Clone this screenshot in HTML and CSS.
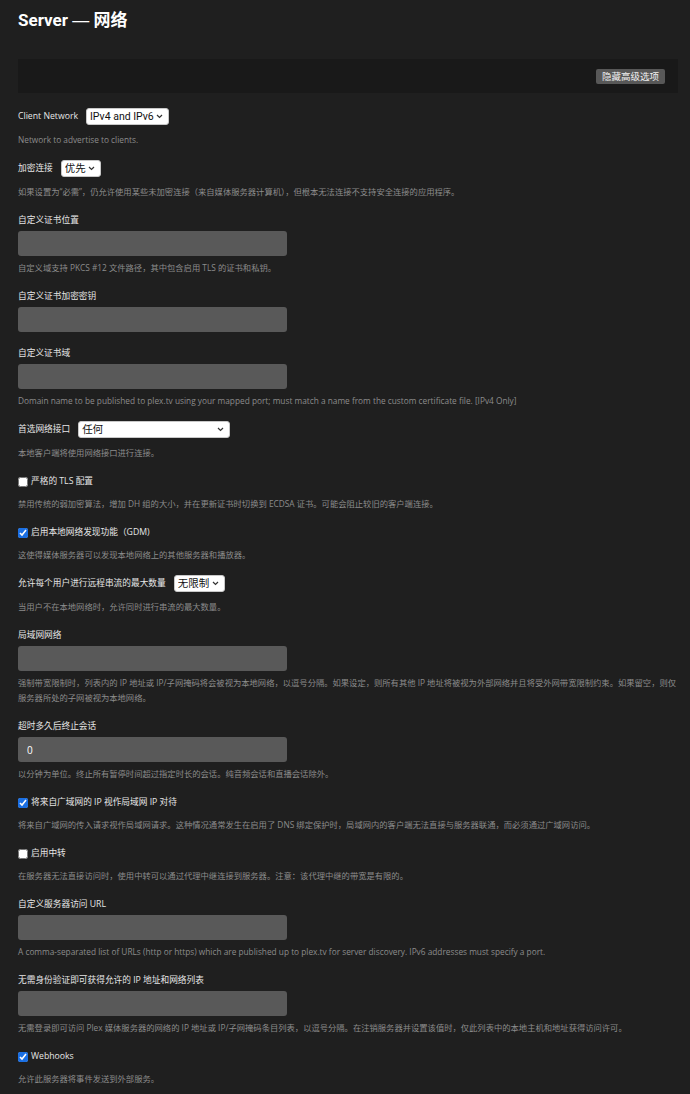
FILE: index.html
```html
<!DOCTYPE html>
<html lang="zh-CN">
<head>
    <meta charset="utf-8">
    <title>Server — 网络</title>
    <link rel="stylesheet" href="styles.css">
</head>
<body>
    <div class="page">
        <h1 class="title">Server <span class="dash">—</span> 网络</h1>

        <div class="toolbar">
            <button class="btn-advanced">隐藏高级选项</button>
        </div>

        <!-- Client network -->
        <div class="field">
            <div class="row">
                <label class="label">Client Network</label>
                <select class="select">
                    <option>IPv4 and IPv6</option>
                </select>
            </div>
            <p class="help">Network to advertise to clients.</p>
        </div>

        <div class="field">
            <div class="row">
                <label class="label">加密连接</label>
                <select class="select">
                    <option>优先</option>
                </select>
            </div>
            <p class="help">如果设置为“必需”，仍允许使用某些未加密连接（来自媒体服务器计算机），但根本无法连接不支持安全连接的应用程序。</p>
        </div>

        <div class="field">
            <label class="label block">自定义证书位置</label>
            <input class="text-input" type="text">
            <p class="help">自定义域支持 PKCS #12 文件路径，其中包含启用 TLS 的证书和私钥。</p>
        </div>

        <div class="field">
            <label class="label block">自定义证书加密密钥</label>
            <input class="text-input" type="text">
        </div>

        <div class="field">
            <label class="label block">自定义证书域</label>
            <input class="text-input" type="text">
            <p class="help">Domain name to be published to plex.tv using your mapped port; must match a name from the custom certificate file. [IPv4 Only]</p>
        </div>

        <div class="field">
            <div class="row">
                <label class="label">首选网络接口</label>
                <select class="select sel-wide">
                    <option>任何</option>
                </select>
            </div>
            <p class="help">本地客户端将使用网络接口进行连接。</p>
        </div>

        <div class="field">
            <label class="row check">
                <input type="checkbox">
                <span class="label">严格的 TLS 配置</span>
            </label>
            <p class="help">禁用传统的弱加密算法，增加 DH 组的大小，并在更新证书时切换到 ECDSA 证书。可能会阻止较旧的客户端连接。</p>
        </div>

        <div class="field">
            <label class="row check">
                <input type="checkbox" checked>
                <span class="label">启用本地网络发现功能（GDM)</span>
            </label>
            <p class="help">这使得媒体服务器可以发现本地网络上的其他服务器和播放器。</p>
        </div>

        <div class="field">
            <div class="row">
                <label class="label">允许每个用户进行远程串流的最大数量</label>
                <select class="select">
                    <option>无限制</option>
                </select>
            </div>
            <p class="help">当用户不在本地网络时，允许同时进行串流的最大数量。</p>
        </div>

        <div class="field">
            <label class="label block">局域网网络</label>
            <input class="text-input" type="text">
            <p class="help">强制带宽限制时，列表内的 IP 地址或 IP/子网掩码将会被视为本地网络，以逗号分隔。如果设定，则所有其他 IP 地址将被视为外部网络并且将受外网带宽限制约束。如果留空，则仅服务器所处的子网被视为本地网络。</p>
        </div>

        <div class="field">
            <label class="label block">超时多久后终止会话</label>
            <input class="text-input" type="text" value="0">
            <p class="help">以分钟为单位。终止所有暂停时间超过指定时长的会话。纯音频会话和直播会话除外。</p>
        </div>

        <div class="field">
            <label class="row check">
                <input type="checkbox" checked>
                <span class="label">将来自广域网的 IP 视作局域网 IP 对待</span>
            </label>
            <p class="help">将来自广域网的传入请求视作局域网请求。这种情况通常发生在启用了 DNS 绑定保护时，局域网内的客户端无法直接与服务器联通，而必须通过广域网访问。</p>
        </div>

        <div class="field">
            <label class="row check">
                <input type="checkbox">
                <span class="label">启用中转</span>
            </label>
            <p class="help">在服务器无法直接访问时，使用中转可以通过代理中继连接到服务器。注意：该代理中继的带宽是有限的。</p>
        </div>

        <div class="field">
            <label class="label block">自定义服务器访问 URL</label>
            <input class="text-input" type="text">
            <p class="help">A comma-separated list of URLs (http or https) which are published up to plex.tv for server discovery. IPv6 addresses must specify a port.</p>
        </div>

        <div class="field">
            <label class="label block">无需身份验证即可获得允许的 IP 地址和网络列表</label>
            <input class="text-input" type="text">
            <p class="help">无需登录即可访问 Plex 媒体服务器的网络的 IP 地址或 IP/子网掩码条目列表，以逗号分隔。在注销服务器并设置该值时，仅此列表中的本地主机和地址获得访问许可。</p>
        </div>

        <div class="field">
            <label class="row check">
                <input type="checkbox" checked>
                <span class="label">Webhooks</span>
            </label>
            <p class="help">允许此服务器将事件发送到外部服务。</p>
        </div>
    </div>
</body>
</html>
```

FILE: styles.css
```css
body {
    margin: 0;
    background: #1f1f1f;
    font-family: "Open Sans", "Noto Sans CJK SC", sans-serif;
    color: #e6e6e6;
}
.page {
    padding: 10px 12px 0 18px;
}
.title {
    font-family: Roboto, "Noto Sans CJK SC", sans-serif;
    font-size: 17px;
    font-weight: 700;
    line-height: 20px;
    color: #fff;
    margin: 0 0 28px;
}
.title .dash {
    font-family: "Liberation Sans", sans-serif;
    font-weight: 400;
}
.toolbar {
    display: flex;
    justify-content: flex-end;
    align-items: center;
    height: 34px;
    padding-right: 13px;
    background: #191919;
    margin-bottom: 15px;
}
.btn-advanced {
    background: #585858;
    color: #f0f0f0;
    border: 0;
    border-radius: 2px;
    font-family: "Noto Sans CJK SC", sans-serif;
    font-size: 9.5px;
    height: 15px;
    padding: 0 6px;
    line-height: 15px;
}
.field {
    margin-bottom: 13px;
}
.row {
    display: flex;
    align-items: center;
    height: 17px;
}
.label {
    font-size: 8.7px;
    line-height: 17px;
    color: #e6e6e6;
}
.row .label {
    margin-right: 8px;
}
.label.block {
    display: block;
}
.select {
    appearance: none;
    -webkit-appearance: none;
    height: 17px;
    background: #fff url("data:image/svg+xml,%3Csvg xmlns='http://www.w3.org/2000/svg' width='7' height='5' viewBox='0 0 7 5'%3E%3Cpath d='M1 1l2.5 2.5 2.5-2.5' fill='none' stroke='%23333' stroke-width='1.2'/%3E%3C/svg%3E") no-repeat right 5px center;
    border: 1px solid #c8c8c8;
    border-radius: 3px;
    font-family: Roboto, "Noto Sans CJK SC", sans-serif;
    font-size: 10.5px;
    color: #111;
    padding: 0 14px 0 3px;
    line-height: 15px;
}
.sel-wide {
    width: 152px;
}
.check input {
    width: 10px;
    height: 10px;
    margin: 0 3px 0 0;
    accent-color: #1a6fe3;
}
.row.check .label {
    margin-right: 0;
}
.row.check + .help {
    margin-top: 6px;
}
.text-input {
    display: block;
    box-sizing: border-box;
    width: 269px;
    height: 25px;
    margin-top: 2px;
    background: #595959;
    border: 0;
    border-radius: 3px;
    padding: 0 9px;
    font-size: 10px;
    color: #fff;
    font-family: "Open Sans", sans-serif;
}
.help {
    margin: 7px 0 0;
    font-size: 8.3px;
    line-height: 15px;
    color: #8c8c8c;
}
.text-input + .help {
    margin-top: 4px;
}
```
